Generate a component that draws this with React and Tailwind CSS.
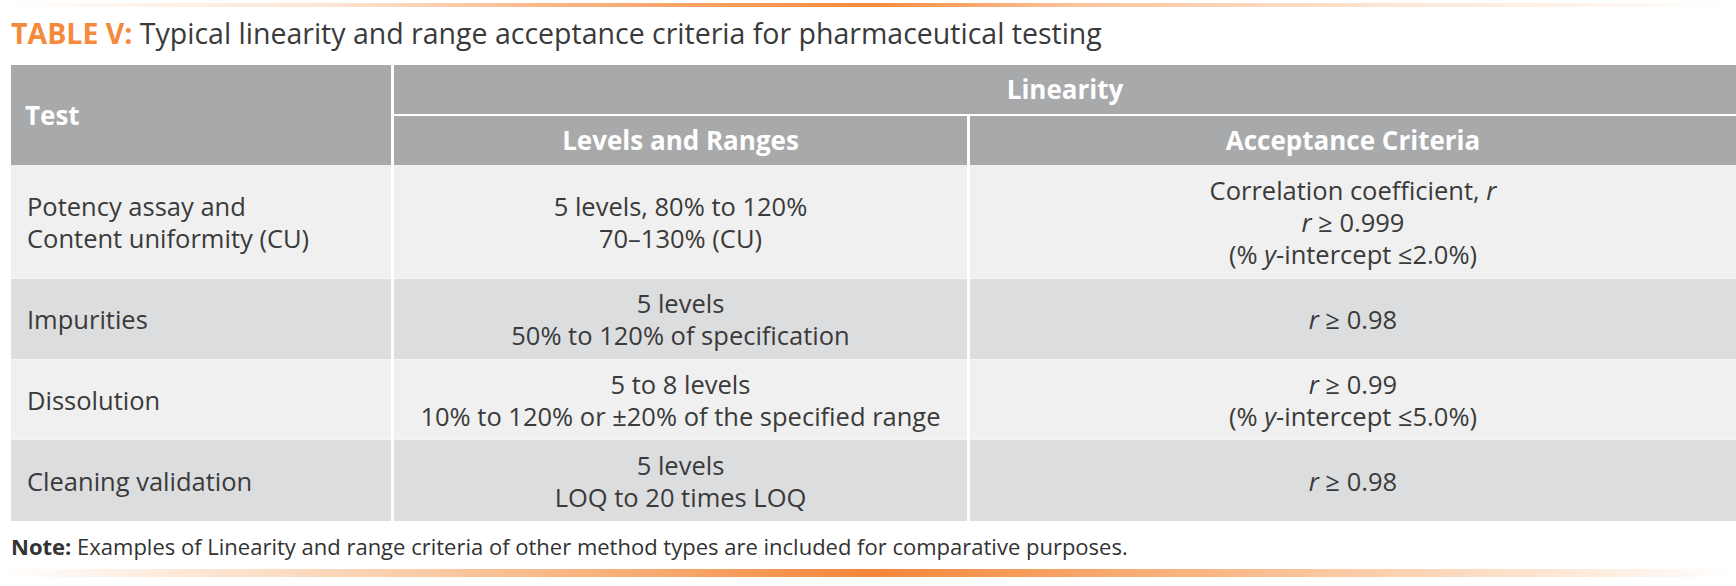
const ROWS = [
  {
    test: (
      <>
        Potency assay and
        <br />
        Content uniformity (CU)
      </>
    ),
    levels: (
      <>
        5 levels, 80% to 120%
        <br />
        70–130% (CU)
      </>
    ),
    criteria: (
      <>
        Correlation coefficient, <i>r</i>
        <br />
        <i>r</i> ≥ 0.999
        <br />
        (% <i>y</i>-intercept ≤2.0%)
      </>
    ),
    h: "h-[113px]",
    bg: "bg-[#eff0ef]",
  },
  {
    test: "Impurities",
    levels: (
      <>
        5 levels
        <br />
        50% to 120% of specification
      </>
    ),
    criteria: (
      <>
        <i>r</i> ≥ 0.98
      </>
    ),
    h: "h-[81px] border-t border-[#f5f5f5]",
    bg: "bg-[#dcdddf]",
  },
  {
    test: "Dissolution",
    levels: (
      <>
        5 to 8 levels
        <br />
        10% to 120% or ±20% of the specified range
      </>
    ),
    criteria: (
      <>
        <i>r</i> ≥ 0.99
        <br />
        (% <i>y</i>-intercept ≤5.0%)
      </>
    ),
    h: "h-[80px] border-t border-[#f5f5f5]",
    bg: "bg-[#eff0ef]",
  },
  {
    test: "Cleaning validation",
    levels: (
      <>
        5 levels
        <br />
        LOQ to 20 times LOQ
      </>
    ),
    criteria: (
      <>
        <i>r</i> ≥ 0.98
      </>
    ),
    h: "h-[82px] border-t border-[#f5f5f5]",
    bg: "bg-[#dcdddf]",
  },
];

export default function App() {
  return (
    <div className="w-[1736px] h-[586px] bg-white overflow-hidden font-['Open_Sans','Liberation_Sans',sans-serif] text-[#3a3a3a]">
      {/* top rule */}
      <div className="mt-[3px] h-[4px] bg-[linear-gradient(to_right,rgba(246,139,62,0)_0%,#fde3cf_20%,#f9b584_32%,#f68b3e_50%,#fbc49b_62%,#fde6d4_80%,rgba(246,139,62,0)_100%)]" />

      {/* title */}
      <div className="mt-[8px] ml-[11px] h-[37px] leading-[37px] text-[28.5px] whitespace-nowrap">
        <span className="font-bold text-[#f68a3c]">TABLE V:</span>{" "}
        <span className="text-[#3a3a3a]">
          Typical linearity and range acceptance criteria for pharmaceutical testing
        </span>
      </div>

      {/* table */}
      <div className="mt-[13px] ml-[11px] grid grid-cols-[380px_573px_766px] gap-x-[3px]">
        <div className="row-span-2 bg-[#a8a9ab] flex items-center pl-[14px] text-white font-bold text-[26px]">
          Test
        </div>
        <div className="col-span-2 h-[51px] border-b-2 border-white bg-[#a8a9ab] flex items-center justify-center text-white font-bold text-[26px]">
          Linearity
        </div>
        <div className="h-[49px] bg-[#a8a9ab] flex items-center justify-center text-white font-bold text-[26px]">
          Levels and Ranges
        </div>
        <div className="h-[49px] bg-[#a8a9ab] flex items-center justify-center text-white font-bold text-[26px]">
          Acceptance Criteria
        </div>

        {ROWS.map((r, i) => (
          <div key={i} className="contents">
            <div className={`${r.h} ${r.bg} flex items-center pl-[16px] text-[25.5px] leading-[32px]`}>
              <div>{r.test}</div>
            </div>
            <div className={`${r.h} ${r.bg} flex items-center justify-center text-center text-[25.5px] leading-[32px]`}>
              <div>{r.levels}</div>
            </div>
            <div className={`${r.h} ${r.bg} flex items-center justify-center text-center text-[25.5px] leading-[32px]`}>
              <div>{r.criteria}</div>
            </div>
          </div>
        ))}
      </div>

      {/* note */}
      <div className="mt-[11px] ml-[11px] h-[28px] leading-[28px] text-[22px] text-[#333] whitespace-nowrap">
        <span className="font-bold">Note:</span> Examples of Linearity and range criteria of other
        method types are included for comparative purposes.
      </div>

      {/* bottom rule */}
      <div className="mt-[9px] h-[8px] bg-[linear-gradient(to_right,rgba(246,139,62,0)_0%,#fde9da_10%,#f9c9a2_25%,#f7a466_40%,#f5853a_50%,#f7a466_62%,#fbd0ae_80%,rgba(246,139,62,0)_100%)]" />
    </div>
  );
}
